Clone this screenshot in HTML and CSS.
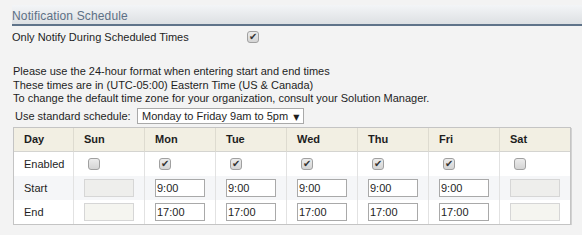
FILE: index.html
```html
<!DOCTYPE html>
<html lang="en">
<head>
  <meta charset="UTF-8">
  <title>Notification Schedule</title>
  <link rel="stylesheet" href="styles.css">
</head>
<body>
  <div class="page">
    <div class="section-head">Notification Schedule</div>

    <div class="opt-row">
      <label class="opt-label" for="onlyScheduled">Only Notify During Scheduled Times</label>
      <input type="checkbox" class="chk" id="onlyScheduled" checked>
    </div>

    <div class="notes">
      <p>Please use the 24-hour format when entering start and end times</p>
      <p>These times are in (UTC-05:00) Eastern Time (US &amp; Canada)</p>
      <p>To change the default time zone for your organization, consult your Solution Manager.</p>
    </div>

    <div class="std-row">
      <span class="std-label">Use standard schedule:</span>
      <div class="select">Monday to Friday 9am to 5pm <span class="arrow">&#9660;</span></div>
    </div>

    <table class="sched">
      <thead>
        <tr>
          <th>Day</th><th>Sun</th><th>Mon</th><th>Tue</th><th>Wed</th><th>Thu</th><th>Fri</th><th>Sat</th>
        </tr>
      </thead>
      <tbody>
        <tr class="row-enabled">
          <td>Enabled</td>
          <td><input type="checkbox" class="chk"></td>
          <td><input type="checkbox" class="chk" checked></td>
          <td><input type="checkbox" class="chk" checked></td>
          <td><input type="checkbox" class="chk" checked></td>
          <td><input type="checkbox" class="chk" checked></td>
          <td><input type="checkbox" class="chk" checked></td>
          <td><input type="checkbox" class="chk"></td>
        </tr>
        <tr class="row-start">
          <td>Start</td>
          <td><input type="text" class="time" disabled></td>
          <td><input type="text" class="time" value="9:00"></td>
          <td><input type="text" class="time" value="9:00"></td>
          <td><input type="text" class="time" value="9:00"></td>
          <td><input type="text" class="time" value="9:00"></td>
          <td><input type="text" class="time" value="9:00"></td>
          <td><input type="text" class="time" disabled></td>
        </tr>
        <tr class="row-end">
          <td>End</td>
          <td><input type="text" class="time" disabled></td>
          <td><input type="text" class="time" value="17:00"></td>
          <td><input type="text" class="time" value="17:00"></td>
          <td><input type="text" class="time" value="17:00"></td>
          <td><input type="text" class="time" value="17:00"></td>
          <td><input type="text" class="time" value="17:00"></td>
          <td><input type="text" class="time" disabled></td>
        </tr>
      </tbody>
    </table>
  </div>
</body>
</html>
```

FILE: styles.css
```css
body {
  margin: 0;
  background-color: #f3f3f3;
  font-family: "Liberation Sans", Arial, sans-serif;
  font-size: 11px;
  color: #1e1e1e;
}

.page {
  padding-left: 12px;
}

.section-head {
  margin-top: 5px;
  height: 15px;
  padding-top: 4px;
  line-height: 15px;
  font-size: 12px;
  letter-spacing: 0.15px;
  color: #5d7085;
  background: linear-gradient(#f3f5f7, #dde0e3);
  border-bottom: 2px solid #5f7389;
}

.opt-row {
  display: flex;
  align-items: center;
  height: 18px;
  margin-top: 2px;
}

.opt-label {
  width: 235px;
}

.chk {
  appearance: none;
  -webkit-appearance: none;
  width: 12px;
  height: 12px;
  margin: 0;
  border: 1px solid #a0a0a0;
  border-radius: 3px;
  background: linear-gradient(#ececec, #d4d4d4);
  position: relative;
  vertical-align: middle;
}

.chk:checked::after {
  content: "\2714";
  position: absolute;
  left: 1px;
  top: -1px;
  font-family: "DejaVu Sans", sans-serif;
  font-size: 10px;
  line-height: 12px;
  color: #333;
}

.notes {
  margin-top: 19px;
  padding-left: 1px;
}

.notes p {
  margin: 0;
  line-height: 13.5px;
}

.std-row {
  display: flex;
  align-items: center;
  margin-top: 2px;
  height: 16px;
}

.std-label {
  width: 122px;
  padding-left: 3px;
}

.select {
  box-sizing: border-box;
  width: 167px;
  height: 16px;
  line-height: 14px;
  padding-left: 4px;
  border: 1px solid #a9a9a9;
  background-color: #fff;
  white-space: nowrap;
}

.select .arrow {
  font-family: "DejaVu Sans", sans-serif;
  font-size: 8px;
  margin-left: 2px;
}

.sched {
  margin-top: 3px;
  margin-left: 1px;
  width: 558px;
  table-layout: fixed;
  border-collapse: separate;
  border-spacing: 0;
  border: 1px solid #c4c4c4;
  box-shadow: 1px 1px 0 #d2d2d2;
  background-color: #fff;
}

.sched th,
.sched td {
  box-sizing: border-box;
  width: 71px;
  padding: 0 0 0 10px;
  text-align: left;
  vertical-align: middle;
  border-left: 1px solid #e2e2e2;
}

.sched th:first-child,
.sched td:first-child {
  width: 59px;
  border-left: none;
}

.sched th {
  height: 24px;
  font-weight: bold;
  background-color: #f2efe3;
  border-bottom: 1px solid #d4d4d0;
  border-left-color: #dedbd0;
}

.sched td {
  height: 24px;
}

.row-enabled .chk {
  margin-left: 4px;
  margin-top: -2px;
}

.row-start td {
  background-color: #f5f6f8;
}

.time {
  box-sizing: border-box;
  width: 50px;
  height: 18px;
  margin: 0;
  padding: 0 1px;
  border: 1px solid #a9a9a9;
  background-color: #fff;
  font-family: "Liberation Sans", Arial, sans-serif;
  font-size: 11px;
  color: #1e1e1e;
  vertical-align: middle;
}

.time:disabled {
  border-color: #d6d6d6;
  background-color: #eeeeec;
}

.row-end .time:disabled {
  background-color: #f5f5f0;
}
```
